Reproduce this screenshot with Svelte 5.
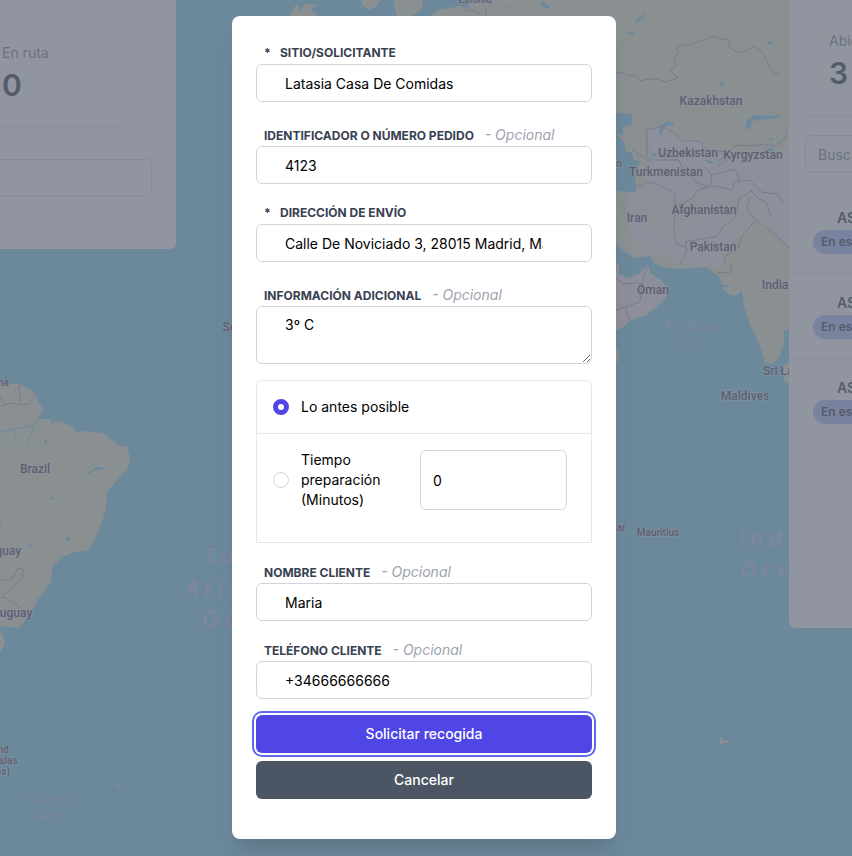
<script>
    let pedido = $state({
        sitio: 'Latasia Casa De Comidas',
        identificador: '4123',
        direccion: 'Calle De Noviciado 3, 28015 Madrid, Madrid, España',
        informacion: '3º C',
        nombre: 'Maria',
        telefono: '+34666666666'
    });
    let recogida = $state('antes');
    let minutos = $state(0);

    const envios = [1, 2, 3];

    const paises = [
        { name: 'Kazakhstan', x: 711, y: 105 },
        { name: 'Uzbekistan', x: 688, y: 157 },
        { name: 'Kyrgyzstan', x: 753, y: 159 },
        { name: 'Turkmenistan', x: 666, y: 176 },
        { name: 'Afghanistan', x: 704, y: 214 },
        { name: 'Iran', x: 637, y: 222 },
        { name: 'Pakistan', x: 713, y: 251 },
        { name: 'India', x: 775, y: 289 },
        { name: 'Oman', x: 653, y: 294 },
        { name: 'Sri Lanka', x: 788, y: 375 },
        { name: 'Maldives', x: 745, y: 400 },
        { name: 'Brazil', x: 35, y: 473 },
        { name: 'Paraguay', x: -4, y: 555 },
        { name: 'Uruguay', x: 10, y: 617 },
        { name: 'Senegal', x: 244, y: 331 }
    ];

    const islas = [
        { name: 'Estonia', x: 475, y: 3 },
        { name: 'Guyana', x: -8, y: 386 },
        { name: 'Azerbaijan', x: 598, y: 167 },
        { name: 'Yemen', x: 600, y: 328 },
        { name: 'Madagascar', x: 598, y: 531 },
        { name: 'Mauritius', x: 658, y: 536 },
        { name: 'Falkland', x: -10, y: 753 },
        { name: 'Islands (Islas', x: -12, y: 764 },
        { name: 'Malvinas)', x: -12, y: 775 }
    ];

    const mares = [
        { name: 'Arabian', x: 664, y: 330 },
        { name: 'Sea', x: 677, y: 346 },
        { name: 'Scotia', x: 28, y: 804 },
        { name: 'Sea', x: 36, y: 820 }
    ];

    const oceanos = [
        { name: 'South', x: 204, y: 564 },
        { name: 'Atlantic', x: 186, y: 596 },
        { name: 'Ocean', x: 202, y: 627 },
        { name: 'Indian', x: 738, y: 546 },
        { name: 'Ocean', x: 740, y: 577 }
    ];
</script>

<div class="page">
    <svg class="map" viewBox="0 0 852 856" preserveAspectRatio="xMidYMin slice" aria-hidden="true">
        <!-- land -->
        <g class="land">
            <path d="M0 384h20l7 4 8 5 3 9 6 8-7 8 3 2 1-1h10v5l8-3 7 3 7 2 2 6 8-1 19 2 10 7 8 6 7 0 3 13-2 9-9 10-12 14-1 17-4 13-7 17-6 11-14 2-13 5-10 10-1 15-11 15-6 10-10 15-6 6-18-2z" />
            <path d="M0 630l2 4 3 8-2 6-3 4z" />
            <path d="M290 16l4-9 5-2-1 6 9-7 10 1-6 5 7 6z" />
            <path d="M361 0h20l-4 6-7 4-8-5z" />
            <path d="M393 0h30v5l-4 7-8 4h-14z" />
            <path d="M470 0H852V330H784v15l-5 12-7 7-7-2-5-17-10-20-6-20-3-18-1 6-6 3-6-2-6-6 8-3-8 0-2-8-6-4-8-6-27 2-16-2-9-4-4-7-16 2-12-8-6-7-8-12V16H430l8-6 12-2 10-2 8 3z" />
            <path d="M784 366l5-4v21l-4-1-2-7z" />
            <path d="M114 784l5 1 5 6-4-4z" />
            <path d="M720 737l3 2 1 2 5-1v2l-4 1-5 1z" />
            <path d="M616 348l3 5-1 7-2 4z" />
        </g>
        <g class="arid">
            <path d="M647 131l13-5 10 6 12 9 18 0 10 10 30 2 22 4 27-8v99l-13-16-20-11-9 6-14 15-8 16-4 10-14-2-8 1-16-2-9-4-4-7-16 2-12-8-6-7-8-12V193h18v-20l8-12z" />
            <path d="M616 272l11 6 11-3 10-10 2 8 12 8 7 9-5 10-8 8-10 7-10 3-8 4-4 5-8 3z" />
            <path d="M616 264h3v7l-2 3z" />
        </g>
        <g class="hill">
            <path d="M634 193l12-6 22 6 8 9 22-7 14 4-20 18-18 22-13-2-10-14-17-8z" />
            <path d="M622 232l14 12 18 8-10 5-10-1-12-9z" />
            <path d="M727 190l18 3 14 14-10 10 14 7-16 14-14-8z" />
        </g>
        <!-- water over the land -->
        <g class="water">
            <path d="M616 113l16 1v10l-9 3v8l-7-1z" />
            <path d="M616 133l8 10 2 9 5 0 3 8 7 1-3 5-3 4 1 22-20-1z" />
            <path d="M747 120l7-5 22 1 3-2v4l-12 1-15 2-2 9-5-3z" />
            <path d="M660 126l6-4 8 0-1 3-8 1-3 9h-3z" />
            <path d="M719 83l6-3-2 4-2 3zM768 42l5-2-1 4-4 1zM636 20l8-7v4l-5 4-3 2zM626 32h8v2l-4 1zM652 153l5 1-3 4zM703 160l10 1-2 3zM762 151l10-3 3 2-12 3zM767 138h6l-1 3zM622 207h4l-2 3zM663 254l2 1-2 3zM685 249h3l-1 4z" />
            <path d="M540 1l8 4 3 4-8-2zM504 7l5-1-1 2z" />
            <path d="M44 439l3 1 0 4-3-2zM49 500l3-4 1 4zM65 537l5 0-1 5-3-2zM28 547l6-6-3 6zM26 578l7 2zM87 473l11-6 9 1-13 3-7 4z" />
        </g>
        <path class="river" d="M0 432l12-2 7-2 16-2 2-5 4-4M0 452l14-13 2-10M28 448l1-12 4-4-2-10M38 598l2 5-4 5" />
        <!-- borders -->
        <g class="border">
            <path d="M20 384l-1 8 2 13 8-1 6-11M0 406l12-3 8 2M0 397l3 5 6 4" />
            <path d="M0 580h11l7-12 5 1v8l-22 21 4-1 16 11M0 523l1 4" />
            <path d="M616 73l8 0 3 3 9-1 4 6 8-2 9 0 9 3 12-4-8-8 6-4-2-8 5-5-4-6 16-3 24-8 8 4 4-2 3 10 9 5 7-2 9-5 7 6 12 23 5-3" />
            <path d="M647 159v-29l15-4 14 8 6 7h17l8 9 21 2 8-7 16 1 12-2 11 2 10-8 2-9" />
            <path d="M628 155l6-4 12 8M647 160l32 0 4 10 7 6 6 6 11 4M717 162l10-7 6 5M718 166l9-6M703 166l9 9-2 12-8 1-1-2M711 175l24-6 5 12M636 187l12-5 10 3 17 8v14l-1 27 2 10 10 3M675 207l16-8 7-9 16-4 18 4 2-8 16-2 11 12 16 2 7 9M685 242l30-5 10-12 10-7 4-20 14-8M686 242v10l-6 13M725 262l-1-5 14-9 4-12 14-16-9-10 3-13M756 220l16 12 17 16M717 273l15-1-2-10M616 278l7 6 14-1 5 1-2 18-24 8M625 307l5 14M642 284l5-17M750 190l8 8 8 4 5 14" />
            <path d="M465 11l9-1 8 5M486 8v8" />
        </g>
        {#each paises as p}
            <text class="country" x={p.x} y={p.y}>{p.name}</text>
        {/each}
        {#each islas as p}
            <text class="country small" x={p.x} y={p.y}>{p.name}</text>
        {/each}
        {#each mares as p}
            <text class="sea" x={p.x} y={p.y}>{p.name}</text>
        {/each}
        {#each oceanos as p}
            <text class="sea ocean" x={p.x} y={p.y}>{p.name}</text>
        {/each}
    </svg>

    <div class="panels">
        <section class="panel left">
            <div class="card">
                <span class="card-title">En ruta</span>
                <strong>0</strong>
            </div>
            <input class="search" type="text" aria-label="Buscar en ruta" />
        </section>

        <section class="panel right">
            <div class="card">
                <span class="card-title">Abiertos</span>
                <strong>3</strong>
            </div>
            <input class="search" type="text" placeholder="Buscar" aria-label="Buscar" />
            <ul>
                {#each envios as envio (envio)}
                    <li>
                        <b>ASAP</b>
                        <span class="pill">En espera</span>
                    </li>
                {/each}
            </ul>
        </section>
    </div>

    <div class="overlay">
        <form class="modal" onsubmit={(e) => e.preventDefault()}>
            <div class="field">
                <label for="sitio"><span class="star">*</span>Sitio/Solicitante</label>
                <input id="sitio" type="text" bind:value={pedido.sitio} />
            </div>
            <div class="field spaced">
                <label for="identificador">Identificador o número pedido <em>- Opcional</em></label>
                <input id="identificador" type="text" bind:value={pedido.identificador} />
            </div>
            <div class="field">
                <label for="direccion"><span class="star">*</span>Dirección de envío</label>
                <input id="direccion" type="text" bind:value={pedido.direccion} />
            </div>
            <div class="field spaced">
                <label for="informacion">Información adicional <em>- Opcional</em></label>
                <textarea id="informacion" rows="2" bind:value={pedido.informacion}></textarea>
            </div>

            <div class="options">
                <div class="option">
                    <input id="antes" type="radio" name="recogida" value="antes" bind:group={recogida} />
                    <label for="antes">Lo antes posible</label>
                </div>
                <div class="option timed">
                    <input id="tiempo" type="radio" name="recogida" value="tiempo" bind:group={recogida} />
                    <label for="tiempo">Tiempo preparación (Minutos)</label>
                    <input class="minutes" type="text" inputmode="numeric" aria-label="Minutos" bind:value={minutos} />
                </div>
            </div>

            <div class="field">
                <label for="nombre">Nombre cliente <em>- Opcional</em></label>
                <input id="nombre" type="text" bind:value={pedido.nombre} />
            </div>
            <div class="field">
                <label for="telefono">Teléfono cliente <em>- Opcional</em></label>
                <input id="telefono" type="text" bind:value={pedido.telefono} />
            </div>

            <div class="actions">
                <button class="submit" type="submit">Solicitar recogida</button>
                <button class="cancel" type="button">Cancelar</button>
            </div>
        </form>
    </div>
</div>

<style>
    :global(body) {
        margin: 0;
    }

    .page, .page * {
        box-sizing: border-box;
    }

    .page {
        position: relative;
        min-height: 100vh;
        overflow: hidden;
        background: #70cef0;
        font-family: Inter, "Liberation Sans", sans-serif;
        font-size: 14px;
        line-height: 20px;
    }

    /* map */
    .map {
        position: absolute;
        inset: 0;
        width: 100%;
        height: 100%;
    }

    .land {
        fill: #e6eac4;
    }

    .arid {
        fill: #f4e8e6;
    }

    .hill {
        fill: #e9ebcf;
        opacity: 0.7;
    }

    .water {
        fill: #70cef0;
    }

    .river {
        fill: none;
        stroke: #70cef0;
    }

    .border {
        fill: none;
        stroke: #a894b8;
    }

    .country {
        font: 500 12px Roboto, sans-serif;
        fill: #2e2a48;
        stroke: #f4f0f4;
        stroke-opacity: 0.5;
        stroke-width: 2px;
        paint-order: stroke;
        text-anchor: middle;
    }

    .country.small {
        font-size: 10px;
    }

    .sea {
        font: italic 400 12px "Open Sans", sans-serif;
        fill: #ccbcff;
        letter-spacing: 2px;
    }

    .sea.ocean {
        font-size: 22px;
        letter-spacing: 6px;
    }

    /* side panels */
    .panels {
        position: absolute;
        inset: 0;
        display: flex;
        justify-content: space-between;
        align-items: flex-start;
    }

    .panel {
        display: flex;
        flex-direction: column;
        overflow: hidden;
        background: #ffffff;
    }

    .panel.left {
        width: 176px;
        height: 249px;
        padding: 18px 24px 0 0;
        align-items: flex-end;
        gap: 32px;
        border-radius: 0 0 6px 0;
    }

    .panel.right {
        width: 63px;
        height: 628px;
        padding-top: 6px;
        gap: 20px;
        border-radius: 0 0 0 6px;
    }

    .card {
        display: flex;
        flex-direction: column;
        flex-shrink: 0;
        width: 150px;
        height: 109px;
        padding: 25px 24px;
        gap: 4px;
        border-radius: 8px;
        box-shadow: 0 1px 3px rgba(0, 0, 0, 0.15);
    }

    .left .card {
        margin-right: 24px;
    }

    .right .card {
        margin-left: 16px;
    }

    .card-title {
        color: #6b7280;
    }

    .card strong {
        font-size: 30px;
        font-weight: 600;
        line-height: 36px;
        color: #111827;
    }

    .search {
        flex-shrink: 0;
        width: 240px;
        height: 38px;
        padding: 8px 12px;
        border: 1px solid #d1d5db;
        border-radius: 6px;
        background: #ffffff;
        font: inherit;
    }

    .right .search {
        margin-left: 16px;
    }

    .search::placeholder {
        color: #6b7280;
    }

    ul {
        margin: 0;
        padding: 0;
        list-style: none;
    }

    li {
        display: flex;
        flex-direction: column;
        align-items: flex-start;
        gap: 2px;
        width: 240px;
        height: 85px;
        padding: 19px 24px;
        border-bottom: 1px solid #e5e7eb;
        color: #111827;
    }

    li:first-child {
        height: 81px;
        padding-top: 15px;
    }

    li:last-child {
        border-bottom: none;
    }

    li b {
        padding-left: 24px;
        font-weight: 600;
    }

    .pill {
        padding: 2px 8px;
        border-radius: 12px;
        background: #a5b4fc;
        font-size: 12px;
        font-weight: 600;
    }

    /* dialog */
    .overlay {
        position: relative;
        display: flex;
        justify-content: center;
        align-items: flex-start;
        min-height: 100vh;
        padding: 16px 20px 16px 16px;
        background: rgba(107, 114, 128, 0.75);
    }

    .modal {
        display: flex;
        flex-direction: column;
        gap: 16px;
        width: 100%;
        max-width: 384px;
        padding: 24px 24px 40px;
        border-radius: 8px;
        background: #ffffff;
        box-shadow: 0 20px 25px -5px rgba(0, 0, 0, 0.1), 0 10px 10px -5px rgba(0, 0, 0, 0.04);
    }

    .field {
        display: flex;
        flex-direction: column;
    }

    .field.spaced {
        margin-top: 4px;
    }

    .field label {
        height: 24px;
        padding: 2px 8px 0;
        font-size: 12px;
        font-weight: 700;
        line-height: 22px;
        text-transform: uppercase;
        white-space: nowrap;
        color: #374151;
    }

    .star {
        display: inline-block;
        width: 16px;
    }

    em {
        margin-left: 8px;
        font-size: 14px;
        font-weight: 400;
        text-transform: none;
        color: #9ca3af;
    }

    .field input,
    .field textarea {
        display: block;
        width: 100%;
        padding: 8px 48px 8px 28px;
        border: 1px solid #d1d5db;
        border-radius: 6px;
        background: #ffffff;
        font: inherit;
        color: #000000;
    }

    .field input {
        height: 38px;
    }

    .options {
        border: 1px solid #e5e7eb;
        border-radius: 6px 6px 0 0;
    }

    .option {
        display: flex;
        align-items: center;
        padding: 16px;
    }

    .option.timed {
        padding: 16px 24px 32px 16px;
        border-top: 1px solid #e5e7eb;
    }

    .option label {
        flex: 1;
        padding-left: 12px;
    }

    .option input[type="radio"] {
        appearance: none;
        flex-shrink: 0;
        width: 16px;
        height: 16px;
        margin: 0;
        border: 1px solid #d1d5db;
        border-radius: 50%;
        background: #ffffff;
    }

    .option input[type="radio"]:checked {
        border: 5px solid #4f46e5;
    }

    .minutes {
        width: 147px;
        height: 60px;
        margin-left: 16px;
        padding: 8px 12px;
        border: 1px solid #d1d5db;
        border-radius: 6px;
        font: inherit;
        color: #000000;
    }

    .actions {
        display: flex;
        flex-direction: column;
        gap: 8px;
    }

    button {
        height: 38px;
        border: none;
        border-radius: 6px;
        font: inherit;
        font-weight: 500;
        color: #ffffff;
        cursor: pointer;
    }

    .submit {
        background: #4f46e5;
        box-shadow: 0 0 0 2px #ffffff, 0 0 0 4px #6366f1;
    }

    .cancel {
        background: #4b5563;
    }
</style>
